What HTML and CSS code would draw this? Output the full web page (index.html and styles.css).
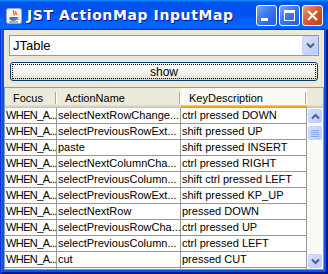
FILE: index.html
```html
<!DOCTYPE html>
<html lang="en">
<head>
    <meta charset="UTF-8">
    <title>JST ActionMap InputMap</title>
    <link rel="stylesheet" href="styles.css">
</head>
<body>
    <div class="window">
        <div class="title-bar">
            <svg class="app-icon" width="16" height="16" viewBox="0 0 16 16">
                <rect x="0.5" y="0.5" width="15" height="15" rx="2" fill="#F4F3EE" stroke="#9AA6C4"/>
                <path d="M8 2.5c-2 1.5 1.5 2.5 0 5M10 3.5c-1 1 1 1.5 0 3.5" stroke="#E4501F" stroke-width="1.3" fill="none"/>
                <path d="M3.5 9h7.5v1.5c0 1.6-1.7 2.5-3.8 2.5s-3.7-0.9-3.7-2.5z" fill="#5273A8"/>
                <path d="M11 9.6c1.6 0 1.6 2 0 2" stroke="#5273A8" stroke-width="1" fill="none"/>
                <path d="M3 14h9" stroke="#5273A8" stroke-width="1"/>
            </svg>
            <span class="title">JST ActionMap InputMap</span>
            <div class="controls">
                <button class="ctl ctl-blue">
                    <svg width="19" height="19" viewBox="0 0 19 19"><rect x="4" y="12" width="7" height="3" fill="#fff"/></svg>
                </button>
                <button class="ctl ctl-blue">
                    <svg width="19" height="19" viewBox="0 0 19 19"><rect x="4.5" y="4.5" width="10" height="10" fill="none" stroke="#fff"/><rect x="4" y="4" width="11" height="3" fill="#fff"/></svg>
                </button>
                <button class="ctl ctl-close">
                    <svg width="19" height="19" viewBox="0 0 19 19"><path d="M5 5l9 9M14 5l-9 9" stroke="#fff" stroke-width="2.2"/></svg>
                </button>
            </div>
        </div>

        <div class="content">
            <div class="top">
                <div class="combo">
                    <span>JTable</span>
                    <span class="combo-arrow">
                        <svg width="9" height="7" viewBox="0 0 9 7"><path d="M1 1.5l3.5 3.5 3.5-3.5" stroke="#4D6185" stroke-width="2" fill="none"/></svg>
                    </span>
                </div>
                <button class="show-button">show</button>
            </div>

            <div class="scroll-pane">
                <div class="table-header">
                    <div class="th">Focus</div>
                    <div class="th">ActionName</div>
                    <div class="th hot">KeyDescription</div>
                </div>
                <div class="corner"></div>

                <div class="table-body">
                    <div class="row"><div class="cell focus">WHEN_A...</div><div class="cell">selectNextRowChange...</div><div class="cell">ctrl pressed DOWN</div></div>
                    <div class="row"><div class="cell focus">WHEN_A...</div><div class="cell">selectPreviousRowExt...</div><div class="cell">shift pressed UP</div></div>
                    <div class="row"><div class="cell focus">WHEN_A...</div><div class="cell">paste</div><div class="cell">shift pressed INSERT</div></div>
                    <div class="row"><div class="cell focus">WHEN_A...</div><div class="cell">selectNextColumnCha...</div><div class="cell">ctrl pressed RIGHT</div></div>
                    <div class="row"><div class="cell focus">WHEN_A...</div><div class="cell">selectPreviousColumn...</div><div class="cell">shift ctrl pressed LEFT</div></div>
                    <div class="row"><div class="cell focus">WHEN_A...</div><div class="cell">selectPreviousRowExt...</div><div class="cell">shift pressed KP_UP</div></div>
                    <div class="row"><div class="cell focus">WHEN_A...</div><div class="cell">selectNextRow</div><div class="cell">pressed DOWN</div></div>
                    <div class="row"><div class="cell focus">WHEN_A...</div><div class="cell">selectPreviousRowCha...</div><div class="cell">ctrl pressed UP</div></div>
                    <div class="row"><div class="cell focus">WHEN_A...</div><div class="cell">selectPreviousColumn...</div><div class="cell">ctrl pressed LEFT</div></div>
                    <div class="row"><div class="cell focus">WHEN_A...</div><div class="cell">cut</div><div class="cell">pressed CUT</div></div>
                    <div class="row"><div class="cell"></div><div class="cell"></div><div class="cell"></div></div>
                </div>

                <div class="vscroll">
                    <div class="sb-btn">
                        <svg width="9" height="7" viewBox="0 0 9 7"><path d="M1 5.5l3.5-3.5 3.5 3.5" stroke="#4D6185" stroke-width="2" fill="none"/></svg>
                    </div>
                    <div class="sb-btn thumb">
                        <svg width="8" height="8" viewBox="0 0 8 8"><path d="M0 1.5h8M0 3.5h8M0 5.5h8M0 7.5h8" stroke="#8BA8E8"/></svg>
                    </div>
                    <div class="track"></div>
                    <div class="sb-btn">
                        <svg width="9" height="7" viewBox="0 0 9 7"><path d="M1 1.5l3.5 3.5 3.5-3.5" stroke="#4D6185" stroke-width="2" fill="none"/></svg>
                    </div>
                </div>
            </div>
        </div>
    </div>
</body>
</html>
```

FILE: styles.css
```css
body {
    margin: 0;
    font-family: 'Liberation Sans', Arial, sans-serif;
    font-size: 11px;
    color: #000;
}

.window {
    width: 328px;
    height: 274px;
    display: flex;
    flex-direction: column;
    background: #0855DD;
    box-shadow: inset 1px 0 #0831D9, inset -1px 0 #00138C, inset 0 -1px #00138C, inset 2px 0 #166AEE, inset -2px 0 #001EA0, inset 0 -2px #001EA0;
}

.title-bar {
    height: 30px;
    flex: none;
    display: flex;
    align-items: center;
    padding: 0 5px 0 6px;
    background: linear-gradient(180deg, #0997ff, #0053ee 8%, #0050ee 40%, #0066ff 88%, #0066ff 93%, #005bff 95%, #003dd7 96%, #003dd7);
}

.app-icon {
    margin: 1px 5px 0 0;
}

.title {
    flex: 1;
    color: #fff;
    font: bold 14px 'DejaVu Sans', sans-serif;
    letter-spacing: 0.6px;
    text-shadow: 1px 1px #0F1089;
}

.controls {
    display: flex;
    gap: 2px;
}

.ctl {
    width: 21px;
    height: 21px;
    padding: 0;
    border: 1px solid #fff;
    border-radius: 3px;
    display: flex;
}

.ctl-blue {
    background: linear-gradient(135deg, #7AA6FA 0%, #3A78F0 45%, #1F5BE6 100%);
}

.ctl-close {
    background: linear-gradient(135deg, #F0A080 0%, #DD5A33 45%, #C23D17 100%);
}

.content {
    flex: 1;
    margin: 0 4px 4px;
    background: #ECE9D8;
    display: flex;
    flex-direction: column;
    min-height: 0;
}

.top {
    padding: 5px 5px 6px;
    display: flex;
    flex-direction: column;
    gap: 6px;
}

.combo {
    height: 21px;
    box-sizing: border-box;
    border: 1px solid #7F9DB9;
    background: #fff;
    display: flex;
    align-items: center;
    justify-content: space-between;
    padding-left: 3px;
    font-size: 13px;
}

.combo-arrow {
    width: 16px;
    height: 19px;
    box-sizing: border-box;
    border: 1px solid #C3D3FD;
    border-radius: 2px;
    background: linear-gradient(135deg, #D9E4FD, #B8CBF7);
    display: flex;
    align-items: center;
    justify-content: center;
}

.show-button {
    margin: 0 1px;
    height: 19px;
    padding: 0;
    border: 1px solid #003C74;
    border-radius: 3px;
    background: linear-gradient(#FFFFFF, #F4F4F0 55%, #E8E6DC 85%, #D6D0C5);
    font: 12px 'Liberation Sans', Arial, sans-serif;
    color: #000;
    outline: 1px dotted #000;
    outline-offset: -3px;
}

.scroll-pane {
    flex: 1;
    min-height: 0;
    border: 1px solid #7F9DB9;
    background: #fff;
    display: grid;
    grid-template-columns: 1fr 16px;
    grid-template-rows: 20px 1fr;
    overflow: hidden;
}

.table-header {
    display: grid;
    grid-template-columns: 52px 124px 126px;
    background: #EBEADB;
}

.th {
    padding-left: 8px;
    display: flex;
    align-items: center;
    padding-bottom: 1px;
    box-shadow: inset 0 -1px #CBC7B8, inset 0 -2px #D6D2C2, inset 0 -3px #E2DECD;
    background:
        linear-gradient(#ACA899, #ACA899) no-repeat right 1px top 4px / 1px 12px,
        linear-gradient(#fff, #fff) no-repeat right 0 top 4px / 1px 12px;
}

.th.hot {
    background-color: #FAF9F4;
    box-shadow: inset 0 -1px #E59700, inset 0 -2px #F9B119, inset 0 -3px #FFC83C;
}

.corner {
    background: #EBEADB;
    box-shadow: inset 0 -1px #CBC7B8, inset 0 -2px #D6D2C2, inset 0 -3px #E2DECD;
}

.table-body {
    overflow: hidden;
}

.row {
    display: grid;
    grid-template-columns: 52px 124px 126px;
    height: 16px;
}

.cell {
    box-sizing: border-box;
    border-right: 1px solid #9A9A9A;
    border-bottom: 1px solid #9A9A9A;
    padding-left: 1px;
    line-height: 15px;
    white-space: nowrap;
    overflow: hidden;
}

.cell.focus {
    letter-spacing: -0.6px;
}

.vscroll {
    display: flex;
    flex-direction: column;
    background: #FAFAF6;
}

.sb-btn {
    height: 16px;
    flex: none;
    box-sizing: border-box;
    border: 1px solid #fff;
    border-radius: 3px;
    background: linear-gradient(135deg, #D6E2FE, #B7CAF7);
    box-shadow: inset 0 0 0 1px #C0D1FA;
    display: flex;
    align-items: center;
    justify-content: center;
}

.thumb {
    margin-top: 1px;
}

.track {
    flex: 1;
}
```
